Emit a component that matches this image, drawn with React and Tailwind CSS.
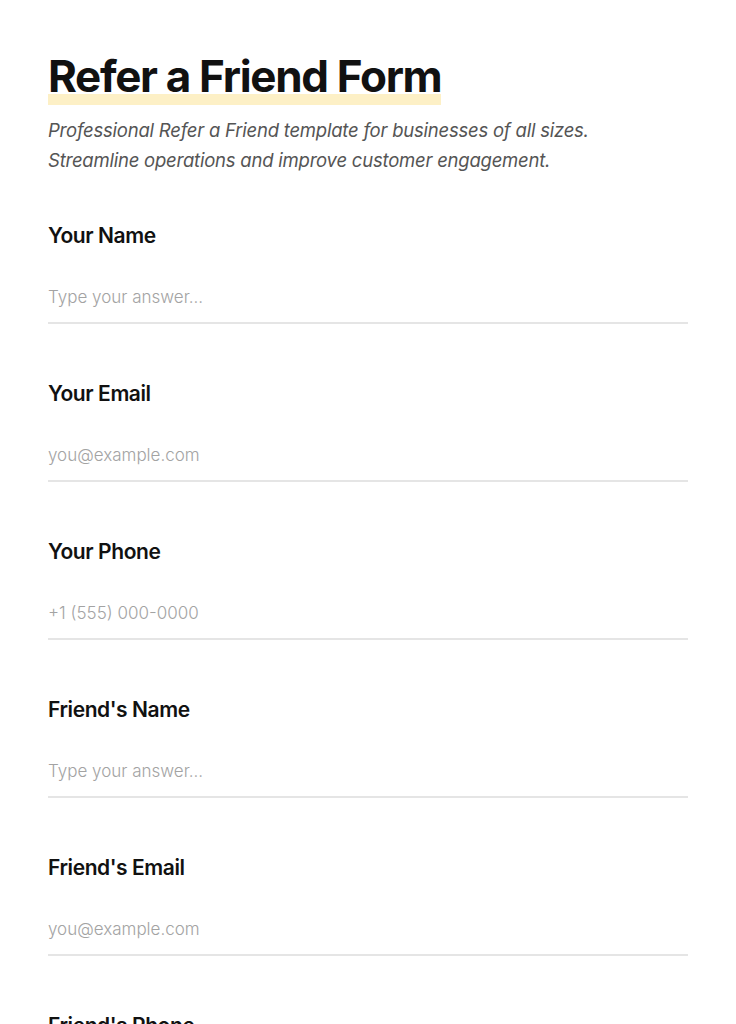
const fields = [
  { label: "Your Name", placeholder: "Type your answer...", type: "text" },
  { label: "Your Email", placeholder: "you@example.com", type: "email" },
  { label: "Your Phone", placeholder: "+1 (555) 000-0000", type: "tel" },
  { label: "Friend's Name", placeholder: "Type your answer...", type: "text" },
  { label: "Friend's Email", placeholder: "you@example.com", type: "email" },
  { label: "Friend's Phone", placeholder: "+1 (555) 000-0000", type: "tel" },
]

export default function App() {
  return (
    <div className="min-h-screen bg-white px-12 pt-[51px] pb-16 font-['Inter',sans-serif] text-[#111]">
      {/* Header */}
      <h1 className="inline-block text-[44px] font-bold leading-[50px] pb-[4px] tracking-[-0.03em] shadow-[inset_0_-11px_0_#fdf0c6]">
        Refer a Friend Form
      </h1>
      <p className="mt-[10px] text-[18.5px] italic leading-[30px] text-[#555] tracking-[-0.012em]">
        Professional Refer a Friend template for businesses of all sizes.
        <br />
        Streamline operations and improve customer engagement.
      </p>

      {/* Fields */}
      <form className="mt-[47px] flex flex-col gap-[56px]">
        {fields.map((f) => (
          <div key={f.label} className="flex flex-col">
            <label className="text-[21px] font-semibold leading-[28px] tracking-[-0.02em]">
              {f.label}
            </label>
            <input
              type={f.type}
              placeholder={f.placeholder}
              className="mt-[22px] h-[52px] w-full border-b-2 border-[#e5e5e5] bg-transparent text-[17px] font-light outline-none placeholder:text-[#a3a3a3]"
            />
          </div>
        ))}
      </form>
    </div>
  )
}
